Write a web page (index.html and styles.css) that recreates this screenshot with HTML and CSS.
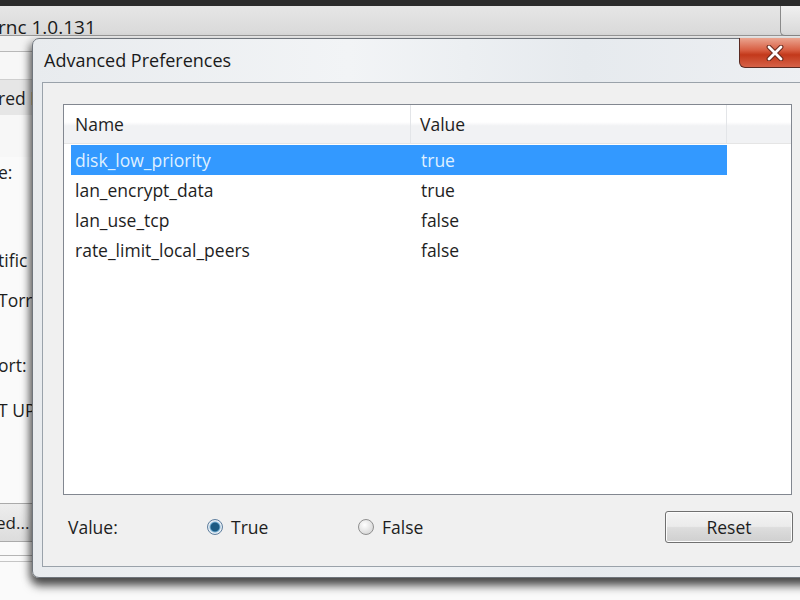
FILE: index.html
```html
<!DOCTYPE html>
<html>
<head>
<meta charset="utf-8">
<link rel="stylesheet" href="styles.css">
</head>
<body>
<div class="desktop">
  <div class="topstrip"></div>
  <div class="mainwin">
    <div class="main-title">
      <span class="main-title-text">rnc 1.0.131</span>
      <span class="main-btn"></span>
    </div>
    <div class="main-sep"></div>
    <div class="main-tabs"><span class="tab">red I</span></div>
    <div class="main-body">
      <div class="mrow r1">e:</div>
      <div class="mrow r2">tific</div>
      <div class="mrow r3">Torre</div>
      <div class="mrow r4">ort:</div>
      <div class="mrow r5">T UP</div>
      <div class="mbtn">ed...</div>
      <div class="mline"></div>
    </div>
  </div>

  <div class="dialog">
    <div class="dlg-title">
      <span class="dlg-title-text">Advanced Preferences</span>
      <span class="close"><svg width="20" height="16" viewBox="0 0 20 16"><path d="M4 2 L16 14 M16 2 L4 14" stroke="#6a2a1e" stroke-width="4.8" stroke-linecap="round"/><path d="M4 2 L16 14 M16 2 L4 14" stroke="#ffffff" stroke-width="2.8" stroke-linecap="round"/></svg></span>
    </div>
    <div class="client">
      <div class="list">
        <div class="head">
          <div class="hcell c1">Name</div>
          <div class="hcell c2">Value</div>
          <div class="hcell c3"></div>
        </div>
        <div class="rows">
          <div class="row sel"><span class="cell c1">disk_low_priority</span><span class="cell c2">true</span></div>
          <div class="row"><span class="cell c1">lan_encrypt_data</span><span class="cell c2">true</span></div>
          <div class="row"><span class="cell c1">lan_use_tcp</span><span class="cell c2">false</span></div>
          <div class="row"><span class="cell c1">rate_limit_local_peers</span><span class="cell c2">false</span></div>
        </div>
      </div>
      <div class="controls">
        <span class="lbl">Value:</span>
        <label class="radio r-true"><span class="dot on"></span>True</label>
        <label class="radio r-false"><span class="dot"></span>False</label>
        <span class="reset">Reset</span>
      </div>
    </div>
  </div>
</div>
</body>
</html>
```

FILE: styles.css
```css
* { box-sizing: border-box; }
html, body { margin: 0; padding: 0; }
body {
  width: 800px;
  height: 600px;
  overflow: hidden;
  font-family: "Open Sans", "Noto Sans", sans-serif;
  color: #1e1e1e;
  background: #e9e9e9;
}
.desktop {
  position: relative;
  width: 800px;
  height: 600px;
  overflow: hidden;
}
.topstrip {
  height: 6px;
  background: #2b2b2b;
}
.mainwin {
  height: 594px;
  background: #f7f7f7;
}
.main-title {
  height: 30px;
  display: flex;
  align-items: flex-end;
  justify-content: space-between;
  background: linear-gradient(#e6e6e6, #d9d9d9);
  border-bottom: 1px solid #9a9a9a;
}
.main-title-text {
  font-size: 19px;
  line-height: 20px;
  margin-left: -2px;
  margin-bottom: -2px;
  color: #1a1a1a;
}
.main-btn {
  width: 20px;
  height: 30px;
  border-left: 1px solid #8a8a8a;
  border-bottom: 1px solid #8a8a8a;
  border-radius: 0 0 0 5px;
  background: linear-gradient(#f0f0f0, #d8d8d8);
  align-self: flex-start;
}
.main-sep {
  height: 16px;
  border-bottom: 1px solid #b8b8b8;
  background: #f2f2f2;
}
.main-tabs {
  height: 36px;
  border-top: 1px solid #cfcfcf;
  margin-top: 27px;
  background: #e6e6e6;
  display: flex;
  align-items: center;
}
.tab { font-size: 17.5px; margin-left: -2px; }
.main-body {
  position: relative;
  background: #fafafa;
  height: 480px;
  font-size: 17.5px;
}
.mrow { height: 30px; line-height: 30px; margin-left: -2px; }
.r1 { margin-top: 42px; }
.r2 { margin-top: 58px; }
.r3 { margin-top: 10px; }
.r4 { margin-top: 35px; }
.r5 { margin-top: 15px; }
.mbtn {
  margin-top: 78px;
  width: 40px;
  height: 39px;
  line-height: 37px;
  background: linear-gradient(#eeeeee, #dcdcdc);
  border-top: 1px solid #aaaaaa;
  border-bottom: 1px solid #aaaaaa;
  font-size: 17px;
  margin-left: -4px;
}
.mline {
  margin-top: 13px;
  height: 7px;
  border-top: 1px solid #b5b5b5;
  border-bottom: 1px solid #c5c5c5;
}

/* dialog window */
.dialog {
  position: absolute;
  left: 32px;
  top: 38px;
  width: 790px;
  height: 540px;
  border: 1px solid #6f757c;
  border-radius: 7px 0 0 7px;
  background: linear-gradient(90deg, #e8ebee 0%, #f2f4f6 40%, #e6eaee 70%, #eef0f3 100%);
  box-shadow: 0 8px 10px rgba(0,0,0,0.6), -3px 3px 8px rgba(0,0,0,0.35);
  padding: 0 0 10px 9px;
  display: flex;
  flex-direction: column;
}
.dlg-title {
  height: 43px;
  position: relative;
}
.dlg-title-text {
  display: block;
  font-size: 18px;
  line-height: 24px;
  padding-top: 9px;
  margin-left: 2px;
  color: #1a1a1a;
}
.close {
  position: absolute;
  right: 20px;
  top: -1px;
  width: 62px;
  height: 30px;
  border: 1px solid #5a2a22;
  border-top: none;
  border-radius: 0 0 0 6px;
  background: linear-gradient(#eaa590 0%, #d85e42 42%, #c3391b 58%, #d66248 100%);
  display: flex;
  align-items: center;
  justify-content: center;
  padding-left: 10px;
}
.client {
  flex: 1;
  background: #f0f0f0;
  border: 1px solid #9aa2aa;
  border-right: none;
  padding: 21px 0 0 20px;
  display: flex;
  flex-direction: column;
}
.list {
  width: 729px;
  height: 391px;
  background: #ffffff;
  border: 1px solid #828790;
}
.head {
  display: flex;
  height: 39px;
  background: linear-gradient(#ffffff 0%, #ffffff 45%, #f1f2f4 55%, #f1f2f4 100%);
  border-bottom: 1px solid #e5e5e5;
}
.hcell {
  font-size: 17.5px;
  line-height: 38px;
  padding-left: 11px;
  border-right: 1px solid #e3e5e8;
}
.hcell.c1 { width: 347px; }
.hcell.c2 { width: 316px; padding-left: 9px; }
.hcell.c3 { flex: 1; border-right: none; }
.rows { padding: 1px 0 0 7px; }
.row {
  display: flex;
  width: 656px;
  height: 30px;
  line-height: 30px;
  font-size: 17.5px;
}
.row .c1 { width: 340px; padding-left: 4px; }
.row .c2 { padding-left: 10px; }
.row.sel {
  background: #3399ff;
  color: #dff0ff;
}
.controls {
  display: flex;
  align-items: center;
  height: 32px;
  margin-top: 16px;
  font-size: 17.5px;
}
.lbl { margin-left: 5px; width: 139px; }
.radio {
  display: flex;
  align-items: center;
  gap: 8px;
}
.r-true { width: 151px; }
.r-false { width: 307px; }
.dot {
  width: 16px;
  height: 16px;
  border-radius: 50%;
  border: 1px solid #8f8f8f;
  background: radial-gradient(circle at 40% 35%, #ffffff, #dcdcdc 70%, #c8c8c8);
}
.dot.on {
  border-color: #5f7f9f;
  background: radial-gradient(circle, #1c5a82 0 4px, #7cb4d8 5px, #e8eef4 6px, #cfd9e3 100%);
}
.reset {
  width: 128px;
  height: 32px;
  border: 1px solid #707070;
  border-radius: 3px;
  background: linear-gradient(#f4f4f4 0%, #ebebeb 48%, #dddddd 52%, #cfcfcf 100%);
  text-align: center;
  line-height: 30px;
  font-size: 17.5px;
  box-shadow: inset 0 0 0 1px #fcfcfc;
}
```
